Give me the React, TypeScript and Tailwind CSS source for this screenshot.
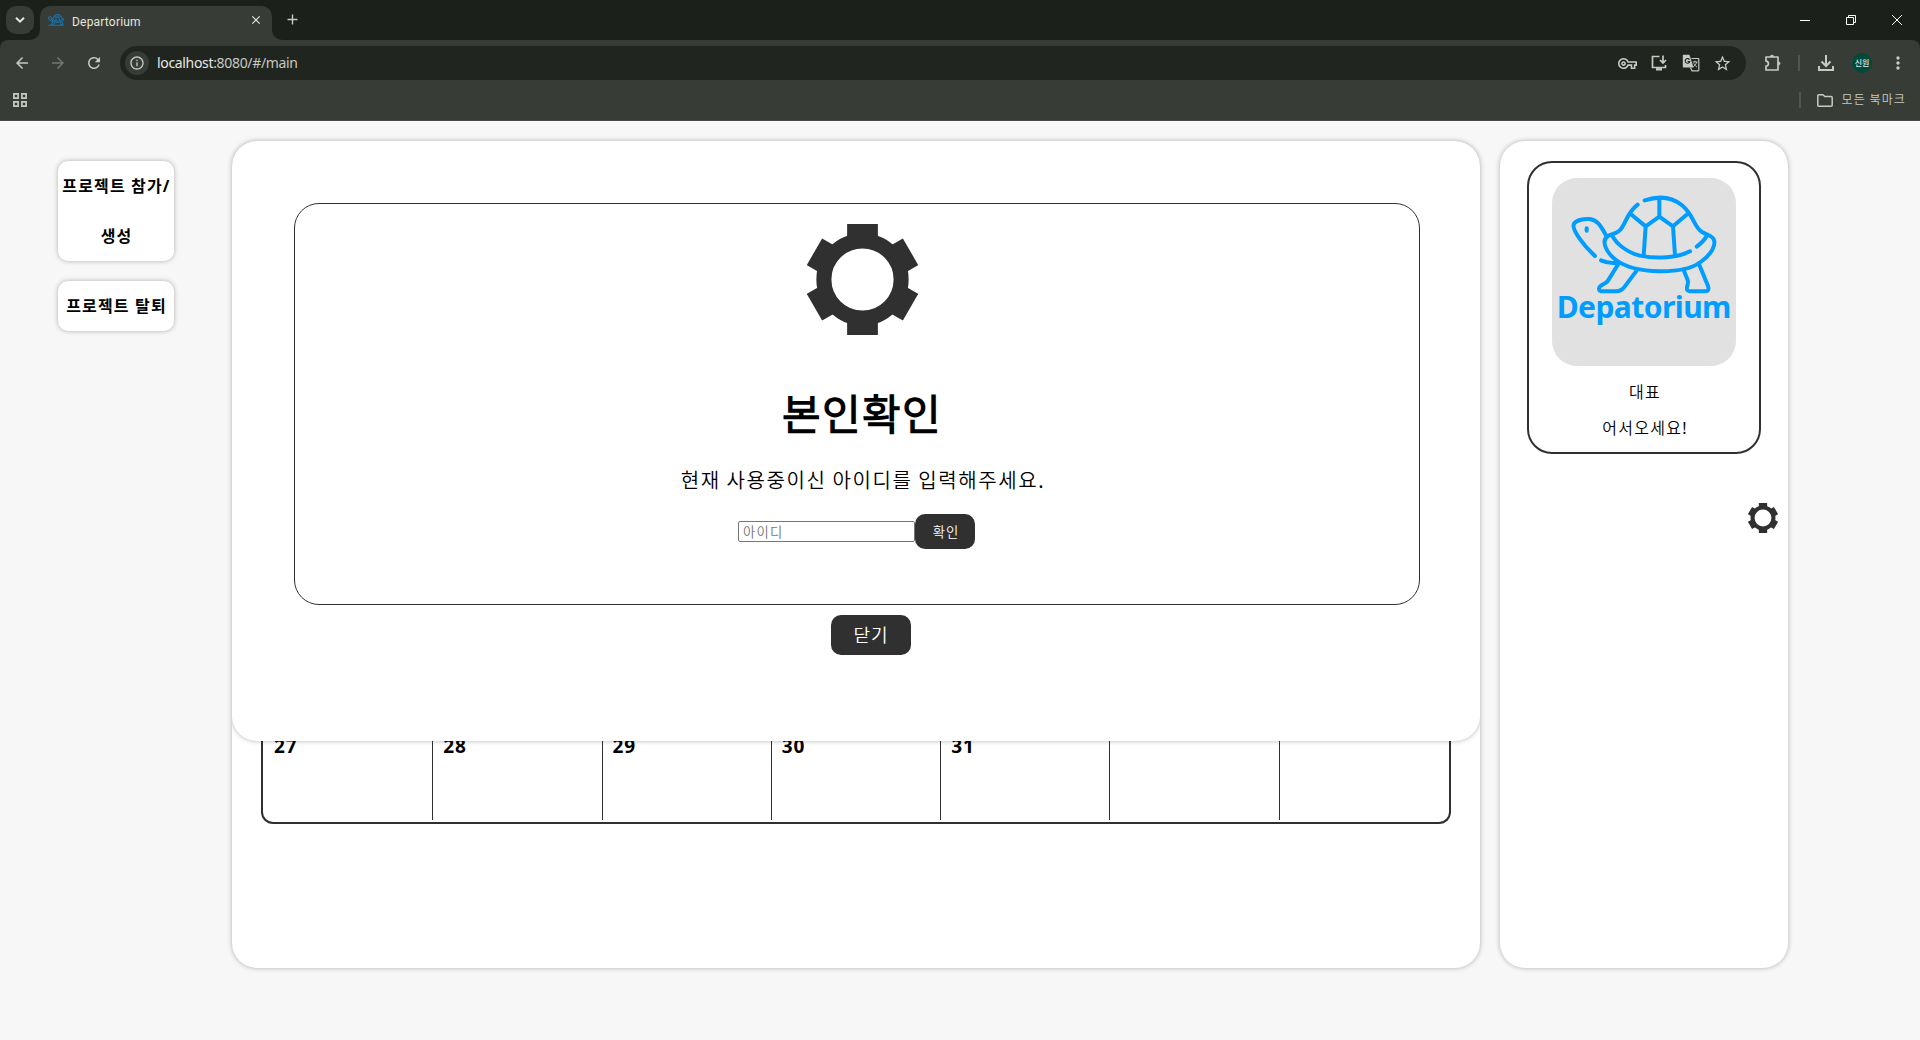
import React from "react";
import {
  MdArrowBack,
  MdArrowForward,
  MdRefresh,
  MdInfoOutline,
  MdOutlineVpnKey,
  MdStarBorder,
  MdMoreVert,
  MdClose,
  MdAdd,
} from "react-icons/md";

function Gear({ className }: { className: string }) {
  return (
    <svg viewBox="-166 -166 332 332" className={className} fill="#303030">
      {[0, 60, 120, 180, 240, 300].map((a) => (
        <rect key={a} x="-46" y="-166" width="92" height="56" transform={`rotate(${a})`} />
      ))}
      <circle r="115.5" fill="none" stroke="#303030" strokeWidth="45" />
    </svg>
  );
}

function TurtleShape() {
  return (
    <g fill="none" strokeLinecap="round" strokeLinejoin="round">
      <path d="M345 378C312 348 276 300 281 284C285 270 312 266 328 267C358 270 366 298 380 319" />
      <path d="M320 295V302" />
      <path d="M363 391C378 398 394 400 412 398" />
      <path d="M473 224C438 250 436 288 418 302C408 311 394 312 384 318C364 330 374 364 408 390C468 434 610 434 662 396C698 370 708 344 701 328C697 317 678 313 666 306C640 290 644 258 606 226C572 198 528 200 494 211" />
      <path d="M398 319C410 342 442 368 480 377C530 388 592 383 630 364" />
      <path d="M650 350C662 341 673 331 680 318" />
      <path d="M452 252L497 289L538 260L579 289L625 250M538 260V206M497 289L491 376M579 289L585 376" />
      <path d="M415 402L384 452C378 462 357 464 357 476C357 482 362 484 370 484H408C420 484 427 480 434 470L470 422" />
      <path d="M610 418L623 450C628 460 618 468 621 478C623 484 629 484 636 484H676C686 484 687 476 684 468L656 400" />
    </g>
  );
}

function TranslateIcon() {
  return (
    <svg width="18" height="18" viewBox="0 0 18 18" className="ml-[14px]" fill="none" stroke="currentColor">
      <path d="M1.500.8H7.500L11.500 13.500H1.500Q.8 13.500.8 12.800V1.500Q.8.8 1.500.8Z" fill="currentColor" stroke="none" />
      <path d="M9.500 4.500H16Q16.800 4.500 16.800 5.300V16Q16.800 16.800 16 16.800H10L8.500 13.500" strokeWidth="1.200" />
      <path d="M10.800 8H15.500M13 6.700V8M14.700 8C14.300 10 12.700 11.700 11.300 12.700M11.700 9.300C12.500 11 14 12.600 15 13.200" strokeWidth="1" />
      <path d="M7.400 5.600A2.300 2.300 0 1 0 7.700 7.500H5.600" stroke="#202520" strokeWidth="1.100" />
    </svg>
  );
}

function Chrome() {
  return (
    <header className="flex h-[121px] flex-col border-b border-[#484c46] bg-[#1c201b] text-[#c7c9c2]">
      <div className="flex h-10 items-start">
        <div className="ml-1.5 mt-1.5 flex h-7 w-7 items-center justify-center rounded-[10px] bg-[#383c36] text-[#e4e6df]">
          <svg width="10" height="6" viewBox="0 0 10 6" fill="none" stroke="currentColor" strokeWidth="2">
            <path d="M1 .8L5 4.600L9 .8" />
          </svg>
        </div>
        <div className="relative ml-1.5 mt-1.5 flex h-[34px] w-[232px] items-center rounded-t-[10px] bg-[#383c36] pb-1">
          <span className="absolute -left-2.5 bottom-0 h-2.5 w-2.5 bg-[#383c36]">
            <span className="block h-full w-full rounded-br-[10px] bg-[#1c201b]" />
          </span>
          <span className="absolute -right-2.5 bottom-0 h-2.5 w-2.5 bg-[#383c36]">
            <span className="block h-full w-full rounded-bl-[10px] bg-[#1c201b]" />
          </span>
          <svg viewBox="270 192 446 330" className="-mt-0.5 ml-2 h-3 w-4" stroke="#1c6da3" strokeWidth="30">
            <TurtleShape />
            <path d="M275 505H710" />
          </svg>
          <span className="ml-2 mt-0.5 font-['Roboto',sans-serif] text-[12px] leading-4 tracking-[0.2px] text-[#e4e6df]">
            Departorium
          </span>
          <MdClose size={14} className="-mt-0.5 mr-[9px] ml-auto text-[#e4e6df]" />
        </div>
        <MdAdd size={17} className="mt-[11px] ml-3" />
        <div className="ml-auto flex h-10 items-center text-white">
          <svg width="10" height="10" viewBox="0 0 10 10" className="mr-9">
            <path d="M0 5.5H10" stroke="currentColor" />
          </svg>
          <svg width="10" height="10" viewBox="0 0 10 10" className="mr-9" fill="none" stroke="currentColor">
            <path d="M.5 2.5H7.5V9.500H.5ZM2.500 2.500V.5H9.500V7.500H7.500" />
          </svg>
          <svg width="10" height="10" viewBox="0 0 10 10" className="mr-[18px]" stroke="currentColor">
            <path d="M0 0L10 10M10 0L0 10" />
          </svg>
        </div>
      </div>
      <div className="flex h-20 flex-col rounded-t-[8px] bg-[#383c36]">
        <div className="flex h-[46px] items-center">
          <MdArrowBack size={18} className="ml-[13px]" />
          <MdArrowForward size={18} className="ml-[18px] text-[#73776f]" />
          <MdRefresh size={18} className="ml-[18px]" />
          <div className="ml-[17px] flex h-[34px] w-[1626px] items-center rounded-full bg-[#202520]">
            <span className="ml-[5px] flex h-6 w-6 items-center justify-center rounded-full bg-[#383c36]">
              <MdInfoOutline size={16} />
            </span>
            <span className="ml-2 font-['Noto_Sans',sans-serif] text-[14px] leading-5 tracking-[-0.33px]">
              <span className="text-[#e6e8e1]">localhost</span>:8080/#/main
            </span>
            <MdOutlineVpnKey size={19} className="ml-auto" />
            <svg width="18" height="18" viewBox="0 0 18 18" className="ml-[13px]" fill="none" stroke="currentColor" strokeWidth="1.7">
              <path d="M9.500 2.500H2.500V13.500H15.500V11M13 1.500V8.500M10 6L13 9L16 6" />
              <path d="M6 15.300H12" strokeWidth="2.400" />
            </svg>
            <TranslateIcon />
            <MdStarBorder size={19} className="mr-[14px] ml-[13px]" />
          </div>
          <svg width="18" height="18" viewBox="0 0 18 18" className="ml-[18px]" fill="none" stroke="currentColor" strokeWidth="1.700" strokeLinejoin="round">
            <path d="M2 3H14V16H2V12.200C5.200 11.800 5.200 7.600 2 7.200Z" />
            <path d="M6.200 2.800A1.800 1.800 0 0 1 9.800 2.800ZM14.300 7.700A1.800 1.800 0 0 1 14.300 11.300Z" fill="currentColor" strokeWidth="0.6" />
          </svg>
          <span className="ml-[16px] h-4 w-0.5 bg-[#51564e]" />
          <svg width="18" height="18" viewBox="0 0 18 18" className="ml-[17px]" fill="none" stroke="currentColor" strokeWidth="2">
            <path d="M9 1V11.500M4.500 7.500L9 12L13.500 7.500M2 12V16H16V12" />
          </svg>
          <span className="ml-[17px] flex h-5 w-5 items-center justify-center rounded-full bg-[#00493b] font-['Noto_Sans_CJK_KR',sans-serif] text-[8px] leading-none font-medium text-[#e6e8e1]">
            신원
          </span>
          <MdMoreVert size={20} className="ml-4" />
        </div>
        <div className="flex h-[34px] items-center pb-1">
          <svg width="14" height="14" viewBox="0 0 14 14" className="mt-[-2px] ml-[13px]" fill="none" stroke="currentColor" strokeWidth="1.700">
            <path d="M.9.9H5.100V5.100H.9ZM8.900.9H13.100V5.100H8.900ZM.9 8.900H5.100V13.100H.9ZM8.900 8.900H13.100V13.100H8.900Z" />
          </svg>
          <span className="-mt-0.5 ml-auto h-4 w-0.5 bg-[#51564e]" />
          <svg width="16" height="13" viewBox="0 0 16 13" className="-mt-px ml-4" fill="none" stroke="currentColor" strokeWidth="1.500" strokeLinejoin="round">
            <path d="M.8 1.800Q.8.8 1.800.8H6L7.800 2.500H14.200Q15.200 2.500 15.200 3.500V11.200Q15.200 12.200 14.200 12.200H1.800Q.8 12.200.8 11.200Z" />
          </svg>
          <span className="-mt-[5px] mr-[14px] ml-[9px] font-['Noto_Sans_CJK_KR_DemiLight','Noto_Sans_CJK_KR',sans-serif] text-[12px] leading-4 tracking-[1.1px] whitespace-nowrap">
            모든 북마크
          </span>
        </div>
      </div>
    </header>
  );
}

function SideButton({ children }: { children: React.ReactNode }) {
  return (
    <button className="w-[116px] rounded-[10px] bg-white pl-px text-center text-[16px] leading-[50px] font-bold tracking-[1.15px] whitespace-nowrap shadow-[0_0_5px_rgba(0,0,0,0.3)]">
      {children}
    </button>
  );
}

function IdentityModal() {
  return (
    <section className="absolute inset-x-0 top-0 z-10 flex h-[600px] flex-col items-center rounded-[25px] bg-white pt-[62px] shadow-[0_0_5px_rgba(0,0,0,0.3)] [clip-path:inset(0_0_-6px_0_round_25px_25px_0_0)]">
      <div className="ml-[2px] flex h-[402px] w-[1126px] flex-col items-center rounded-[25px] border border-[#303030] pt-5">
        <Gear className="ml-[11px] h-[111px] w-[111px]" />
        <h1 className="mt-[49px] ml-[10px] text-[42px] leading-[60px] font-bold tracking-[1.4px]">본인확인</h1>
        <p className="mt-[22px] ml-[12px] text-[20px] leading-[30px] tracking-[1.6px] [word-spacing:-0.9px]">
          현재 사용중이신 아이디를 입력해주세요.
        </p>
        <div className="mt-[18px] mr-px flex items-center">
          <input
            className="h-[21px] w-[177px] rounded-[2px] border border-[#767676] bg-white px-1 text-[13.33px] leading-none tracking-[1.3px] placeholder:text-[#757575]"
            placeholder="아이디"
          />
          <button className="h-[35px] w-[60px] rounded-[10px] bg-[#303030] pl-[2px] text-[13.33px] leading-5 tracking-[1px] text-white">
            확인
          </button>
        </div>
      </div>
      <button className="mt-[10px] ml-[30px] h-10 w-20 rounded-[10px] bg-[#303030] text-[18px] leading-6 tracking-[1px] text-white">
        닫기
      </button>
    </section>
  );
}

const lastWeek = ["27", "28", "29", "30", "31", "", ""];

export default function App() {
  return (
    <div className="flex h-[1040px] w-[1920px] flex-col overflow-hidden bg-[#f7f7f7] font-['Noto_Sans','Noto_Sans_CJK_KR_DemiLight','Noto_Sans_CJK_KR',sans-serif] text-black">
      <Chrome />
      <div className="flex pt-5 pl-[58px]">
        <nav className="mt-5 flex w-[116px] flex-col gap-5 font-['Noto_Sans','Noto_Sans_CJK_KR',sans-serif]">
          <SideButton>
            프로젝트 참가/
            <br />
            생성
          </SideButton>
          <SideButton>프로젝트 탈퇴</SideButton>
        </nav>
        <main className="relative ml-[58px] flex h-[827px] w-[1248px] flex-col rounded-[25px] bg-white px-[29px] shadow-[0_0_5px_rgba(0,0,0,0.3)]">
          <div className="mt-[540px] grid h-[143px] w-[1190px] grid-cols-7 rounded-b-[12px] border-2 border-t-0 border-[#303030] pb-[2px] pl-px">
            {lastWeek.map((day, i) => (
              <div
                key={i}
                className="border-r border-[#303030] pt-[53px] pl-[10px] text-[19px] leading-6 font-bold tracking-[0.9px] last:border-r-0"
              >
                {day}
              </div>
            ))}
          </div>
          <IdentityModal />
        </main>
        <aside className="ml-5 flex h-[827px] w-[288px] flex-col items-center rounded-[25px] bg-white pt-5 shadow-[0_0_5px_rgba(0,0,0,0.3)]">
          <div className="flex h-[293px] w-[234px] flex-col items-center rounded-[25px] border-2 border-[#303030] pt-[15px]">
            <svg viewBox="216 144 552 564" className="h-[188px] w-[184px] rounded-[25px] bg-[#e1e1e1]" stroke="#009dff" strokeWidth="12">
              <TurtleShape />
              <text
                x="230"
                y="563"
                stroke="none"
                fill="#009dff"
                textLength="524"
                className="text-[90px] font-bold"
              >
                Depatorium
              </text>
            </svg>
            <p className="mt-[8px] ml-[2px] text-[16px] leading-9 tracking-[1.3px]">대표</p>
            <p className="ml-[2px] text-[16px] leading-9 tracking-[1.3px]">어서오세요!</p>
          </div>
          <Gear className="mt-[49px] mr-[10px] h-[30px] w-[30px] self-end" />
        </aside>
      </div>
    </div>
  );
}
